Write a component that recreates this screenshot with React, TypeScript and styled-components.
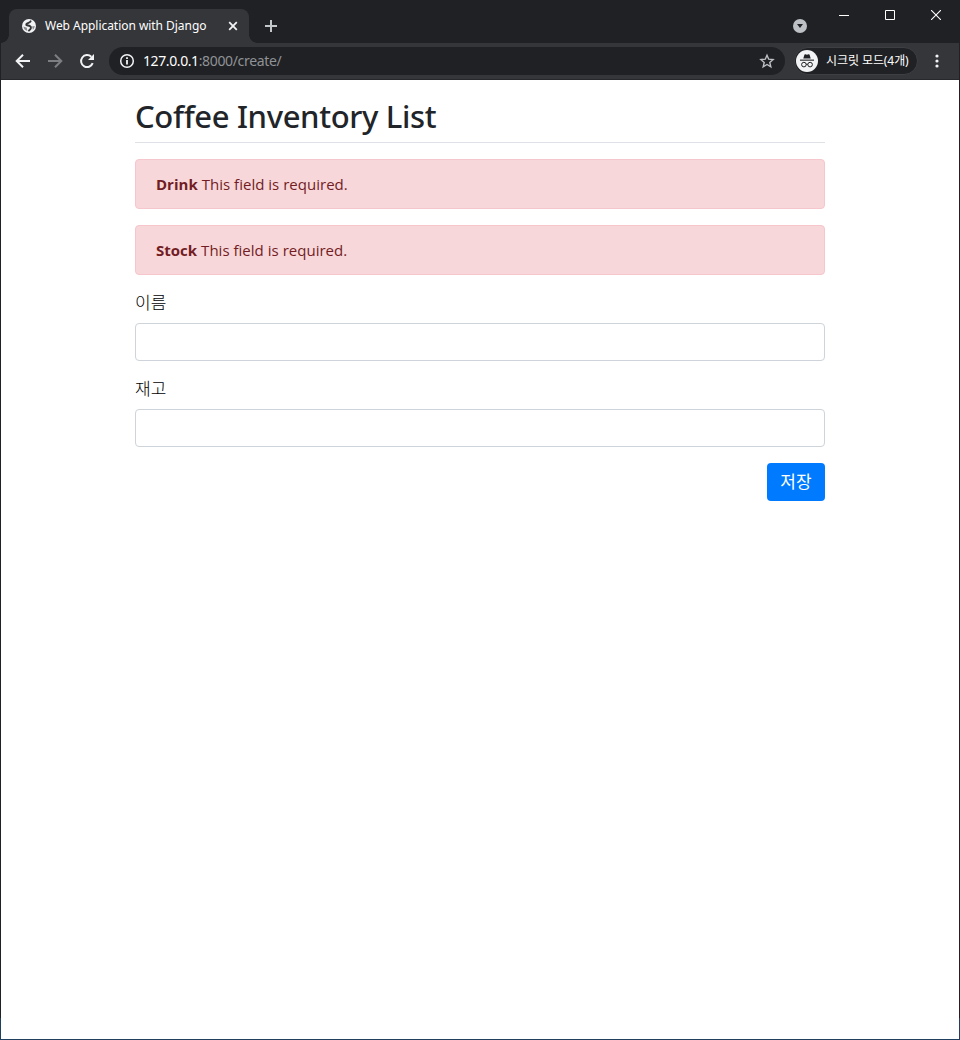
import React from "react";
import styled, { createGlobalStyle } from "styled-components";

const GlobalStyle = createGlobalStyle`
  *, *::before, *::after { box-sizing: border-box; }
  body { margin: 0; background: #fff; }
`;

const uiFont = `"Noto Sans", "Noto Sans CJK KR", sans-serif`;
const pageFont = `"Open Sans", "Noto Sans CJK KR", sans-serif`;

const Window = styled.div`
  width: 960px;
  height: 1040px;
  display: flex;
  flex-direction: column;
  border: 1px solid #202124;
  border-top: 0;
  border-image: linear-gradient(#202124 1018px, #1f405f 1018px) 1;
  background: #fff;
  font-family: ${uiFont};
  overflow: hidden;
`;

const TabStrip = styled.header`
  flex: none;
  height: 43px;
  display: flex;
  align-items: flex-start;
  background: #202124;
  padding-left: 8px;
`;

const Tab = styled.div`
  position: relative;
  width: 240px;
  height: 34px;
  margin-top: 9px;
  padding: 0 8px 0 12px;
  display: flex;
  align-items: center;
  background: #35363a;
  border-radius: 8px 8px 0 0;

  &::before, &::after {
    content: "";
    position: absolute;
    bottom: 0;
    width: 8px;
    height: 8px;
  }
  &::before {
    left: -8px;
    background: radial-gradient(circle at 0 0, transparent 7.5px, #35363a 8px);
  }
  &::after {
    right: -8px;
    background: radial-gradient(circle at 100% 0, transparent 7.5px, #35363a 8px);
  }
`;

const TabTitle = styled.span`
  flex: 1;
  margin-left: 8px;
  font-size: 12px;
  letter-spacing: -0.04px;
  line-height: 16px;
  white-space: nowrap;
  color: #fff;
`;

const IconButton = styled.button<{ $w: number; $h: number }>`
  width: ${(p) => p.$w}px;
  height: ${(p) => p.$h}px;
  flex: none;
  padding: 0;
  border: 0;
  background: none;
  display: flex;
  align-items: center;
  justify-content: center;
`;

const NewTab = styled(IconButton)`
  margin: 12px 0 0 8px;
`;

const TabSearch = styled(IconButton)`
  margin: 12px 7px 0 auto;
`;

const WindowControls = styled.div`
  display: flex;
`;

const Toolbar = styled.nav`
  flex: none;
  height: 37px;
  display: flex;
  align-items: center;
  padding: 0 5px 1px 6px;
  background: #35363a;
  border-bottom: 1px solid #27282b;
`;

const AddressBar = styled.div`
  width: 676px;
  height: 28px;
  margin-left: 6px;
  padding: 0 10px;
  display: flex;
  align-items: center;
  background: #202124;
  border-radius: 14px;
`;

const Url = styled.span`
  flex: 1;
  margin-left: 8px;
  font-size: 14px;
  letter-spacing: -0.35px;
  line-height: 20px;
  color: #8f9296;
`;

const Host = styled.span`
  color: #fff;
  letter-spacing: -0.4px;
`;

const Incognito = styled.div`
  width: 124px;
  height: 28px;
  margin-left: 9px;
  padding-left: 1px;
  display: flex;
  align-items: center;
  border: 1px solid #3e3f43;
  border-radius: 14px;
  background: #202124;
`;

const IncognitoText = styled.span`
  margin-left: 8px;
  font-size: 12px;
  letter-spacing: -0.08px;
  line-height: 16px;
  color: #fff;
  white-space: nowrap;
`;

const MenuButton = styled(IconButton)`
  margin-left: 5px;
`;

const Page = styled.main`
  width: 690px;
  margin: 0 auto;
  color: #212529;
  font-family: ${pageFont};
  font-size: 16px;
  line-height: 24px;
`;

const Title = styled.h2`
  margin: 16px 0;
  height: 47px;
  padding-top: 1px;
  border-bottom: 1px solid #dee2e6;
  font-family: ${uiFont};
  font-size: 31px;
  font-weight: 500;
  line-height: 38px;
  letter-spacing: -0.35px;
  white-space: nowrap;
`;

const Alert = styled.div`
  height: 50px;
  margin-bottom: 16px;
  padding: 12px 20px;
  border: 1px solid #f5c6cb;
  border-radius: 4px;
  background: #f8d7da;
  color: #721c24;
  font-size: 15px;
  letter-spacing: 0.02px;
`;

const Field = styled.div`
  margin-bottom: 16px;
`;

const Label = styled.label`
  display: block;
  height: 24px;
  margin-bottom: 8px;
  color: #000;
  font-size: 17px;
  font-weight: 300;
  line-height: 24px;
`;

const Input = styled.input`
  display: block;
  width: 100%;
  height: 38px;
  padding: 6px 12px;
  border: 1px solid #ced4da;
  border-radius: 4px;
  background: #fff;
  font: inherit;
`;

const Actions = styled.div`
  display: flex;
  justify-content: flex-end;
`;

const SaveButton = styled.button`
  width: 58px;
  height: 38px;
  padding: 0;
  border: 0;
  border-radius: 4px;
  background: #007bff;
  color: #fff;
  font-family: inherit;
  font-size: 17px;
  line-height: 24px;
`;

const errors = [
  { field: "Drink", message: "This field is required." },
  { field: "Stock", message: "This field is required." },
];

const fields = [
  { name: "drink", label: "이름" },
  { name: "stock", label: "재고" },
];

const GlobeIcon = () => (
  <svg width="16" height="16" viewBox="0 0 16 16">
    <circle cx="8" cy="8" r="7" fill="#f1f3f4" />
    <path
      d="M9.600 3.300C8.800 5 6.300 4.600 5.300 6.300 4.800 7.700 7.500 7.300 9 8.100 10.600 9 10.200 10.900 8 12.600"
      fill="none"
      stroke="#35363a"
      strokeWidth="1.900"
      strokeLinecap="round"
    />
    <path d="M2.400 8.500 5.800 9.800 6.400 12.900Q3 12.200 2.400 8.500ZM11 8.600l2.800-.5Q13.500 10.500 12 11.700Z" fill="#35363a" opacity=".55" />
  </svg>
);

const BackIcon = () => (
  <svg width="16" height="16" viewBox="0 0 16 16" fill="none" stroke="#f1f3f4" strokeWidth="2">
    <path d="M15 8H2.500M8 1.700 1.700 8 8 14.300" />
  </svg>
);

const ForwardIcon = () => (
  <svg width="16" height="16" viewBox="0 0 16 16" fill="none" stroke="#7d7e81" strokeWidth="2">
    <path d="M1 8h12.500M8 1.700 14.300 8 8 14.300" />
  </svg>
);

const ReloadIcon = () => (
  <svg width="16" height="16" viewBox="0 0 16 16">
    <path d="M13.700 10.200A6 6 0 1 1 12.300 3.800" fill="none" stroke="#f1f3f4" strokeWidth="2" />
    <path d="M15 1v6H9z" fill="#f1f3f4" />
  </svg>
);

const InfoIcon = () => (
  <svg width="16" height="16" viewBox="0 0 16 16">
    <circle cx="8" cy="8" r="6.300" fill="none" stroke="#f1f3f4" strokeWidth="1.500" />
    <path d="M7.100 7h1.800v4.500H7.100zM7.100 4.300h1.800v1.600H7.100z" fill="#f1f3f4" />
  </svg>
);

const StarIcon = () => (
  <svg width="16" height="16" viewBox="0 0 16 16" fill="none" stroke="#bdc1c6" strokeWidth="1.400">
    <path d="m8 2.200 1.700 4 4.400.4-3.300 2.900 1 4.300L8 11.500l-3.800 2.300 1-4.300L1.900 6.600l4.400-.4z" />
  </svg>
);

const IncognitoIcon = () => (
  <svg width="22" height="22" viewBox="0 0 22 22">
    <circle cx="11" cy="11" r="11" fill="#f1f3f4" />
    <path d="M7.300 8.600 8.400 4.700Q8.700 4 9.400 4.200L11 4.700l1.600-.5q.7-.2 1 .5l1.100 3.900z" fill="#202124" />
    <path d="M4 9.600h14v1.100H4z" fill="#202124" />
    <g fill="none" stroke="#202124" strokeWidth="1">
      <circle cx="7.900" cy="14.600" r="2.300" />
      <circle cx="14.100" cy="14.600" r="2.300" />
      <path d="M10.200 14.400q.8-.6 1.600 0" />
    </g>
  </svg>
);

export default function App() {
  return (
    <>
      <GlobalStyle />
      <Window>
        <TabStrip>
          <Tab>
            <GlobeIcon />
            <TabTitle>Web Application with Django</TabTitle>
            <IconButton $w={16} $h={16} aria-label="Close tab">
              <svg width="10" height="10" viewBox="0 0 10 10" stroke="#f1f3f4" strokeWidth="1.800">
                <path d="m1.200 1.200 7.600 7.600M8.800 1.200 1.200 8.800" />
              </svg>
            </IconButton>
          </Tab>
          <NewTab $w={28} $h={28} aria-label="New tab">
            <svg width="12" height="12" viewBox="0 0 12 12" stroke="#c4c7ca" strokeWidth="2">
              <path d="M6 0v12M0 6h12" />
            </svg>
          </NewTab>
          <TabSearch $w={28} $h={28} aria-label="Search tabs">
            <svg width="14" height="14" viewBox="0 0 14 14">
              <circle cx="7" cy="7" r="7" fill="#bdc1c6" />
              <path d="M4 5h6L7 9z" fill="#202124" />
            </svg>
          </TabSearch>
          <WindowControls>
            <IconButton $w={46} $h={30} aria-label="Minimize">
              <svg width="10" height="10" viewBox="0 0 10 10">
                <path d="M0 5h10v1H0z" fill="#fff" />
              </svg>
            </IconButton>
            <IconButton $w={46} $h={30} aria-label="Maximize">
              <svg width="10" height="10" viewBox="0 0 10 10">
                <path d="M.5.5h9v9h-9z" fill="none" stroke="#fff" />
              </svg>
            </IconButton>
            <IconButton $w={46} $h={30} aria-label="Close">
              <svg width="10" height="10" viewBox="0 0 10 10" stroke="#fff" strokeWidth="1.100">
                <path d="m0 0 10 10M10 0 0 10" />
              </svg>
            </IconButton>
          </WindowControls>
        </TabStrip>
        <Toolbar>
          <IconButton $w={32} $h={28} aria-label="Back"><BackIcon /></IconButton>
          <IconButton $w={32} $h={28} aria-label="Forward"><ForwardIcon /></IconButton>
          <IconButton $w={32} $h={28} aria-label="Reload"><ReloadIcon /></IconButton>
          <AddressBar>
            <InfoIcon />
            <Url><Host>127.0.0.1</Host>:8000/create/</Url>
            <StarIcon />
          </AddressBar>
          <Incognito>
            <IncognitoIcon />
            <IncognitoText>시크릿 모드(4개)</IncognitoText>
          </Incognito>
          <MenuButton $w={28} $h={28} aria-label="Menu">
            <svg width="4" height="14" viewBox="0 0 4 14" fill="#f1f3f4">
              <circle cx="2" cy="2" r="1.600" />
              <circle cx="2" cy="7" r="1.600" />
              <circle cx="2" cy="12" r="1.600" />
            </svg>
          </MenuButton>
        </Toolbar>
        <Page>
          <Title>Coffee Inventory List</Title>
          {errors.map((e) => (
            <Alert key={e.field} role="alert">
              <strong>{e.field}</strong> {e.message}
            </Alert>
          ))}
          <form>
            {fields.map((f) => (
              <Field key={f.name}>
                <Label htmlFor={f.name}>{f.label}</Label>
                <Input id={f.name} name={f.name} />
              </Field>
            ))}
            <Actions>
              <SaveButton type="button">저장</SaveButton>
            </Actions>
          </form>
        </Page>
      </Window>
    </>
  );
}
